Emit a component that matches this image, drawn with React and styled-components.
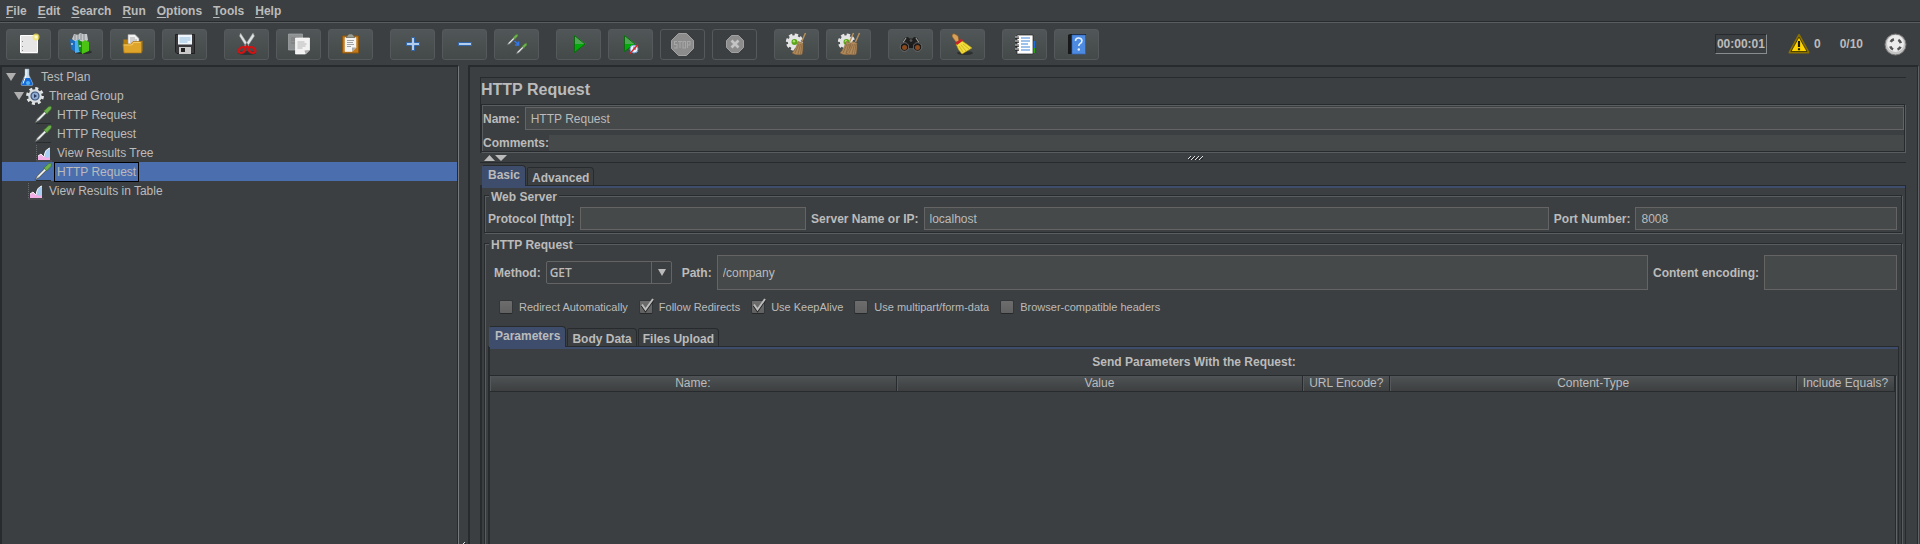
import React from "react";
import styled, { createGlobalStyle, css } from "styled-components";

const c = {
  bg: "#3c3f41",
  text: "#bbbbbb",
  dark: "#282b2d",
  light: "#5a5d5f",
  field: "#45494a",
  fieldBorder: "#646464",
  tab: "#3f4d6d",
  select: "#4b6eaf",
};

const GlobalStyle = createGlobalStyle`
  * { box-sizing: border-box; }
  body { margin: 0; background: ${c.bg}; }
  body, button, input, select {
    font-family: "Liberation Sans", Arial, sans-serif;
    font-size: 12px;
    line-height: 14px;
    color: ${c.text};
  }
`;

/* ---------- shared pieces ---------- */

const etched = css`
  border: 1px solid ${c.dark};
  box-shadow: inset 1px 1px 0 ${c.light}, 1px 1px 0 ${c.light};
`;

const Page = styled.div`
  min-height: 100vh;
  display: flex;
  flex-direction: column;
  overflow: hidden;
`;

const MenuBar = styled.nav`
  display: flex;
  gap: 11px;
  height: 23px;
  padding: 0 6px;
  border-bottom: 1px solid ${c.light};
  box-shadow: inset 0 -1px 0 ${c.dark};
`;

const MenuItem = styled.button`
  border: 0;
  padding: 0;
  background: none;
  font-weight: bold;
  &::first-letter {
    text-decoration: underline;
    text-underline-offset: 2px;
    text-decoration-skip-ink: none;
  }
`;

const ToolBar = styled.div`
  display: flex;
  align-items: center;
  justify-content: space-between;
  height: 42px;
  padding: 0 13px 0 6px;
`;

const Tools = styled.div`
  display: flex;
  gap: 17px;
`;

const ToolGroup = styled.div`
  display: flex;
  gap: 7px;
`;

const ToolButton = styled.button`
  display: flex;
  width: 45px;
  height: 31px;
  padding: 3px 10px;
  border: 1px solid #56595b;
  border-radius: 3px;
  background: ${(p) => (p.disabled ? "none" : "linear-gradient(#515658, #434849)")};
`;

const Icon = styled.svg.attrs((p) => ({
  viewBox: `0 0 ${p.$size || 23} ${p.$size || 23}`,
  "aria-hidden": true,
}))`
  flex: none;
  display: block;
  width: ${(p) => p.$size || 23}px;
  height: ${(p) => p.$size || 23}px;
  overflow: visible;
`;

const Status = styled.div`
  display: flex;
  align-items: center;
`;

const Timer = styled.output`
  padding: 1px 1px;
  border: 1px solid;
  border-color: ${c.dark} #8a8d8f #8a8d8f ${c.dark};
  line-height: 16px;
  font-weight: bold;
  margin-right: 21px;
`;

const WarningButton = styled.button`
  display: flex;
  align-items: center;
  gap: 4px;
  padding: 0;
  border: 0;
  background: none;
  font-weight: bold;
  margin-right: 19px;
`;

const Threads = styled.span`
  font-weight: bold;
  margin-right: 21px;
`;

const Split = styled.div`
  flex: 1;
  display: flex;
`;

/* ---------- tree ---------- */

const TreePane = styled.aside`
  flex: 0 0 459px;
  border: solid ${c.dark};
  border-width: 2px 1px 0 2px;
  border-right-color: #77797b;
  box-shadow: inset -1px 0 0 ${c.dark};
`;

const TreeList = styled.ul`
  list-style: none;
  margin: 0;
  padding: 0 1px 0 0;
`;

const TreeRow = styled.li`
  display: flex;
  align-items: center;
  height: 19px;
  padding-left: ${(p) => p.$indent}px;
  background: ${(p) => (p.$selected ? c.select : "none")};
`;

const Toggle = styled.button`
  flex: none;
  display: flex;
  padding: 0;
  border: 0;
  margin-right: 2px;
  background: none;
`;

const TreeLabel = styled.span`
  margin-left: 3px;
  padding: 2px;
  outline: ${(p) => (p.$selected ? "1px solid #000" : "none")};
`;

const Divider = styled.div`
  flex: 0 0 9px;
  display: flex;
  flex-direction: column;
  justify-content: flex-end;
  align-items: center;
`;

/* ---------- editor ---------- */

const Editor = styled.main`
  flex: 1;
  min-width: 0;
  display: flex;
  flex-direction: column;
  margin-right: 1px;
  padding: 10px 12px 0 10px;
  border: solid ${c.dark};
  border-width: 2px 1px 0 2px;
  border-right-color: #606365;
  box-shadow: inset -1px 0 0 ${c.dark};
`;

const Header = styled.section`
  border: solid ${c.dark};
  border-width: 1px 0 0 1px;
`;

const Title = styled.h1`
  margin: 0;
  height: 26px;
  font-size: 16px;
  line-height: 23px;
`;

const Naming = styled.div`
  ${etched}
  display: flex;
  flex-direction: column;
  gap: 5px;
  margin: 0 1px 1px 0;
  padding: 2px 0 0 1px;
`;

const Label = styled.label`
  flex: none;
  font-weight: bold;
`;

const Row = styled.div`
  display: flex;
  align-items: center;
  gap: ${(p) => p.$gap ?? 5}px;
  padding: ${(p) => (p.$inset ? "0 2px 0 6px" : 0)};
`;

const Field = styled.input`
  flex: ${(p) => p.$grow || 1} 1 0;
  min-width: 0;
  width: 0;
  height: ${(p) => p.$h || 23}px;
  padding: 0 5px;
  border: ${(p) => (p.$plain ? "0" : `1px solid ${c.fieldBorder}`)};
  border-radius: 0;
  background: ${c.field};
  outline: 0;
`;

const EncodingField = styled(Field)`
  flex: 0 0 133px;
`;

const Splitter = styled.div`
  display: grid;
  grid-template-columns: 1fr auto 1fr;
  align-items: center;
  height: 9px;
  padding-left: 4px;
`;

const TabPane = styled.section`
  flex: ${(p) => (p.$fill ? 1 : "none")};
  display: flex;
  flex-direction: column;
  ${(p) => p.$framed && `border-top: 1px solid ${c.dark};`}
`;

const TabStrip = styled.div`
  display: flex;
  align-items: flex-end;
  gap: 1px;
  height: ${(p) => p.$h}px;
  padding-left: ${(p) => p.$left}px;
`;

const Tab = styled.button`
  position: relative;
  height: ${(p) => (p["aria-selected"] ? 21 : 18)}px;
  margin-bottom: ${(p) => (p["aria-selected"] ? -1 : 0)}px;
  padding: ${(p) => (p["aria-selected"] ? "0 5px 2px" : "2px 4px 0")};
  border: 1px solid ${c.dark};
  border-width: 1px 1px 0;
  border-left-color: ${(p) => (p["aria-selected"] ? c.tab : c.dark)};
  border-radius: 2px 4px 0 0;
  background: ${(p) => (p["aria-selected"] ? c.tab : c.bg)};
  font-weight: bold;
`;

const TabBody = styled.div`
  flex: 1;
  display: flex;
  flex-direction: column;
  border: solid ${c.dark};
  border-width: 1px 1px 0 2px;
  padding-top: 2px;
  background: linear-gradient(${c.tab}, ${c.tab}) 0 0 / 100% 2px no-repeat;
`;

const Group = styled.fieldset`
  ${etched}
  position: relative;
  min-width: 0;
  flex: ${(p) => (p.$fill ? 1 : "none")};
  display: flex;
  flex-direction: column;
  margin: ${(p) => (p.$fill ? "10px 3px 0 2px" : "7px 3px 0 2px")};
  padding: ${(p) => (p.$fill ? "11px 2px 0 3px" : "11px 4px 2px 3px")};
  ${(p) => p.$fill && "border-bottom: 0;"}
`;

const Legend = styled.legend`
  position: absolute;
  top: -6px;
  left: 4px;
  padding: 0 2px;
  background: ${c.bg};
  font-weight: bold;
`;

const SelectBox = styled.span`
  position: relative;
  display: flex;
  width: 126px;
  margin-right: 5px;
`;

const Select = styled.select`
  appearance: none;
  width: 100%;
  height: 23px;
  padding: 0 24px 0 3px;
  border: 1px solid ${c.fieldBorder};
  border-radius: 2px;
  background: linear-gradient(${c.fieldBorder}, ${c.fieldBorder}) right 19px top 0 / 1px 100% no-repeat, ${c.bg};
  font-family: "Open Sans", sans-serif;
  font-weight: 600;
`;

const SelectArrow = styled.svg`
  position: absolute;
  right: 6px;
  top: 8px;
  width: 8px;
  height: 7px;
  pointer-events: none;
`;

const Checks = styled.div`
  display: flex;
  gap: 11px;
  margin: 10px 0 12px;
  padding-left: 11px;
`;

const CheckLabel = styled.label`
  display: flex;
  align-items: center;
  gap: 6px;
  height: 14px;
  font-size: 11px;
`;

const CheckBox = styled.span`
  position: relative;
  display: flex;
`;

const CheckInput = styled.input`
  appearance: none;
  width: 14px;
  height: 14px;
  margin: 0;
  border: 1px solid #333638;
  border-bottom-color: #26292a;
  border-radius: 2px;
  background: linear-gradient(#6d6d6d, #616161);
  & + svg { visibility: hidden; }
  &:checked + svg { visibility: visible; }
`;

const CheckMark = styled.svg`
  position: absolute;
  left: 0;
  top: -2px;
  width: 16px;
  height: 16px;
  overflow: visible;
  pointer-events: none;
`;

const TableTitle = styled.h2`
  margin: 0;
  font-size: 12px;
  line-height: 26px;
  text-align: center;
`;

const TableFrame = styled.div`
  flex: 1;
  margin-right: 1px;
  border-top: 1px solid ${c.dark};
  border-right: 1px solid #606365;
  box-shadow: inset -1px 0 0 ${c.dark};
  padding-right: 1px;
`;

const Table = styled.table`
  width: 100%;
  table-layout: fixed;
  border-collapse: separate;
  border-spacing: 0;
`;

const Th = styled.th`
  width: ${(p) => (p.$w ? `${p.$w}px` : "auto")};
  height: 16px;
  padding: 0;
  border-bottom: 1px solid ${c.dark};
  border-right: 1px solid ${c.dark};
  background: linear-gradient(#4f5355, #3d3f40);
  box-shadow: inset 1px 0 0 #56595b;
  font-weight: normal;
  line-height: 15px;
  white-space: nowrap;
`;

/* ---------- drawings ---------- */

const NewIcon = () => (
  <Icon>
    <path d="M3.5 2.5h17v17h-17z" fill="#e6e6e6" stroke="#fff" />
    <path d="M4 20.5h17" stroke="#777" />
    <path d="M5.5 8v1M5.5 13v1M5.5 17v1" stroke="#888" />
    <circle cx="19" cy="4" r="3.5" fill="#f5e65a" opacity=".75" />
    <circle cx="19" cy="4" r="1.5" fill="#fffbd0" />
  </Icon>
);

const TemplatesIcon = () => (
  <Icon>
    <ellipse cx="14" cy="19" rx="9" ry="2" fill="#2b2e2f" />
    <path d="M3 6 5 1l4 1 2-2 3 1 4 0 1 6-4 3-8 0z" fill="#c5c9cb" />
    <path d="M6 2v5M9 1v6M12 1v6M15 1v6" stroke="#8a8e90" />
    <path d="M1 6l5 2v11l-4-3z" fill="#1a6fc0" />
    <path d="M6 8l5-2v13l-5 1z" fill="#49aef0" />
    <path d="M9 7l5 2v12l-4-3z" fill="#178a10" />
    <path d="M13 9l3-2 4 2v9l-7 3z" fill="#4cc413" />
    <path d="M3 10v2M11 12v2" stroke="#fff" />
  </Icon>
);

const OpenIcon = () => (
  <Icon>
    <path d="M2.5 6.5h6l1 2h11l1-1v11h-19z" fill="#b67e0c" />
    <path d="M7 1.5h7l4 4v9H7z" fill="#f2f2f2" stroke="#999" strokeWidth=".6" />
    <path d="M9 5h5M9 7h7M9 9h7" stroke="#9a9a9a" strokeWidth=".8" />
    <path d="M2 11h8l2-2.500h8.500V20H3z" fill="#dfa42a" stroke="#a9750f" strokeWidth=".7" />
    <path d="M3 12h8l1.500-2.500h7" stroke="#f7d479" strokeWidth=".8" fill="none" />
  </Icon>
);

const SaveIcon = () => (
  <Icon>
    <path d="M2.500 1.500h19v19H4l-1.500-1.500z" fill="#39393c" stroke="#202022" />
    <path d="M5 1.500h14v10H5z" fill="#eef6fc" />
    <path d="M6.500 5h11M6.500 7h11M6.500 9h8" stroke="#93bede" />
    <path d="M6 14h12v7H6z" fill="#c9c9c9" />
    <path d="M8 15h4v4H8z" fill="#222" />
  </Icon>
);

const CutIcon = () => (
  <Icon>
    <ellipse cx="12" cy="20" rx="9" ry="2" fill="#303334" />
    <path d="M5.500 0L14 13l-2 2L4.500 3zM18 0L9.500 13l2 2L19.500 3z" fill="#dfe2e2" stroke="#8b8e8e" strokeWidth=".5" />
    <g fill="none" stroke="#d31313" strokeWidth="2.200">
      <ellipse cx="7" cy="17" rx="3.600" ry="2.600" transform="rotate(-35 7 17)" />
      <ellipse cx="17" cy="17" rx="3.600" ry="2.600" transform="rotate(35 17 17)" />
    </g>
    <path d="M10 14.500l2-1.500 2 1.500" stroke="#d31313" strokeWidth="1.600" fill="none" />
  </Icon>
);

const CopyIcon = () => (
  <Icon>
    <path d="M1.500 1h14v16h-14z" fill="#8e9192" stroke="#a5a8a9" strokeWidth=".7" />
    <path d="M4 5h8M4 7h6M4 10h4" stroke="#777" strokeWidth=".8" />
    <path d="M8.500 5h14v12l-4 4h-10z" fill="#f2f2f2" stroke="#fff" strokeWidth=".7" />
    <path d="M10.500 9h7M10.500 11h9M10.500 13h8M10.500 15h5" stroke="#a8a8a8" strokeWidth=".8" />
    <path d="M22.500 17l-5 .5 1 3.500z" fill="#aaa" />
  </Icon>
);

const PasteIcon = () => (
  <Icon>
    <path d="M3.500 3h16v17h-16z" fill="#c27a1c" stroke="#8f560d" />
    <path d="M6 4.500h11v10l-4 4H6z" fill="#f4f4f4" stroke="#fff" strokeWidth=".5" />
    <path d="M8 7.500h7M8 9.500h6M8 11.500h7M8 13.500h4" stroke="#999" strokeWidth=".9" />
    <path d="M17 14.500l-4 0v4z" fill="#aaa" />
    <path d="M7 4.500 9 2l1-1h3l1 1 2 2.500z" fill="#9a9d93" stroke="#55584f" strokeWidth=".6" />
  </Icon>
);

const PlusIcon = () => (
  <Icon>
    <path d="M10.500 4.500h3v5h5v3h-5v5h-3v-5h-5v-3h5z" fill="#b4cdec" stroke="#3167ab" />
  </Icon>
);

const MinusIcon = () => (
  <Icon>
    <path d="M5.500 9.500h13v3h-13z" fill="#b4cdec" stroke="#3167ab" />
  </Icon>
);

const Dropper = () => (
  <>
    <path d="M0 12.500L1.500 9.500 7.500 3.500l1.500 1.500-6 6z" fill="#c4cac8" stroke="#4c5250" strokeWidth=".6" />
    <path d="M2.500 10l5-5" stroke="#fff" strokeWidth=".7" />
    <path d="M6.500 3.500L7.500 3l2.500-2.500 1.500-.3.700.7-.3 1.500L9.500 5 9 6z" fill="#6fb14e" stroke="#3b7529" strokeWidth=".5" />
  </>
);

const ToggleIcon = () => (
  <Icon>
    <g transform="translate(2 1) scale(.9)"><Dropper /></g>
    <path d="M9.500 8l4.500 4m-.5-3.500V12H10" stroke="#3177e8" strokeWidth="1.600" fill="none" />
    <g transform="translate(11 10) scale(.9)"><Dropper /></g>
  </Icon>
);

const PlayIcon = () => (
  <Icon>
    <path d="M7 2v9h12z" fill="#4fa653" />
    <path d="M7 20v-9h12z" fill="#04a90a" />
    <path d="M7.500 2.500v17L18 11z" fill="none" stroke="#0c690f" />
  </Icon>
);

const PlayNowIcon = () => (
  <Icon>
    <path d="M5 2v9h12z" fill="#4fa653" />
    <path d="M5 19v-8h12z" fill="#04a90a" />
    <path d="M5.500 2.500v16L16 11z" fill="none" stroke="#0c690f" />
    <circle cx="15" cy="16" r="4" fill="#e9f2fb" stroke="#6d9bc9" />
    <path d="M15 13.500V16h2" stroke="#355f92" fill="none" />
    <path d="M11 20.500l8-9" stroke="#dc2222" strokeWidth="1.400" />
  </Icon>
);

const StopIcon = () => (
  <Icon>
    <path d="M7.500.5h8l7 7v8l-7 7h-8l-7-7v-8z" fill="#8c8c8c" stroke="#a2a2a2" />
    <g fill="none" stroke="#a6a6a6" strokeWidth="1.100">
      <path d="M6 8.500H3.500v3H6v3.500H3M7 8.500h4M9 8.500V15M12 8.500h2.500V15H12zM16.500 15V8.500H19V12h-2.500" />
    </g>
  </Icon>
);

const ShutdownIcon = () => (
  <Icon>
    <path d="M8.500 2.500h7l5 5v7l-5 5h-7l-5-5v-7z" fill="#8c8c8c" stroke="#a0a0a0" />
    <path d="M8.500 7.500l7 7m0-7l-7 7" stroke="#c4c4c4" strokeWidth="2.600" />
  </Icon>
);

const Gear = ({ x = 9.5, y = 9 }) => (
  <g transform={`translate(${x} ${y})`}>
    <circle r="7.300" fill="none" stroke="#e6e6e6" strokeWidth="2.600" strokeDasharray="3.400 2.330" />
    <circle r="6.700" fill="#e4e4e4" />
    <circle r="3" fill="#5aa71a" />
    <circle cx="-.5" cy="-.8" r="1.200" fill="#a9e06b" />
  </g>
);

const Broom = ({ x = 0 }) => (
  <g transform={`translate(${x} 0)`}>
    <path d="M20.500 0l-4 9" stroke="#b58f5c" strokeWidth="1.500" />
    <path d="M13 8.500l5 1.500c0 5 0 8-1 11.500-3 .5-7 .5-10-1.500 3-3 5-7 6-11.500z" fill="#b08a5c" stroke="#7b5b35" strokeWidth=".5" />
    <path d="M14 11l-4 9M15.500 11l-2.500 10M17 11l-1.500 10" stroke="#7b5b35" strokeWidth=".6" />
  </g>
);

const ClearIcon = () => <Icon><Gear /><Broom /></Icon>;
const ClearAllIcon = () => <Icon><Gear /><Broom x={-4} /><Broom x={2} /></Icon>;

const SearchIcon = () => (
  <Icon>
    <path d="M1 14L5.500 5l3.500-1 2 2h2l2-2 3.500 1 4.500 9z" fill="#1f1f1f" />
    <path d="M4 9.500l3-4.500M20 9.500L17 5" stroke="#9a9a9a" strokeWidth="1.200" />
    <circle cx="12" cy="7.500" r="1.800" fill="#555" stroke="#141414" strokeWidth=".6" />
    <circle cx="5.500" cy="14" r="4.300" fill="#1a1a1a" stroke="#7a7a7a" strokeWidth=".8" />
    <circle cx="18.500" cy="14" r="4.300" fill="#1a1a1a" stroke="#7a7a7a" strokeWidth=".8" />
    <circle cx="5.500" cy="14.500" r="2.500" fill="#8a4a20" />
    <circle cx="18.500" cy="14.500" r="2.500" fill="#8a4a20" />
    <path d="M10 11h4v4h-4z" fill="#1c1c1c" />
  </Icon>
);

const SweepIcon = () => (
  <Icon>
    <ellipse cx="14" cy="20" rx="8" ry="2" fill="#2d3031" />
    <path d="M1 3Q1 0 4 1l3 2 1 5-3 1-3-4z" fill="#d9a05a" stroke="#8a5a22" strokeWidth=".6" />
    <path d="M11 8q5 3 10 7l-10 6Q7 17 5 11z" fill="#f0dc3c" stroke="#b79a10" strokeWidth=".6" />
    <path d="M8 13l4 6M10 12l5 6M12 11l6 5" stroke="#c7a915" strokeWidth=".7" />
    <path d="M4.500 10l6-4.500 1.500 2-6 4.500z" fill="#d0202a" />
  </Icon>
);

const NotesIcon = () => (
  <Icon>
    <path d="M19 8h3v7h-3z" fill="#1f70d8" />
    <path d="M19 15h3v5h-3z" fill="#26a416" />
    <path d="M4 2h16v19H4z" fill="#fff" stroke="#222" strokeWidth=".7" />
    <path d="M8 5h9M8 8h9M8 11h7M8 14h9M8 17h9" stroke="#3f86d6" strokeWidth="1.200" />
    <path d="M2 4.500h4M2 8.500h4M2 12.500h4M2 16.500h4" stroke="#222" strokeWidth="2.400" />
    <path d="M2 4h4M2 8h4M2 12h4M2 16h4" stroke="#eee" strokeWidth="1.200" />
  </Icon>
);

const HelpIcon = () => (
  <Icon>
    <path d="M3 2l2-1h16v19l-2 1H3z" fill="#17191b" />
    <path d="M7 2h13.500v19H7z" fill="#4d8be0" stroke="#3067b8" strokeWidth=".7" />
    <path d="M10.500 8q0-3 3-3t3.500 2.500q0 2-2 3.200-1.200.8-1.200 2.300" stroke="#e6f1ff" strokeWidth="1.500" fill="none" />
    <circle cx="13.800" cy="16.500" r="1.200" fill="#e6f1ff" />
  </Icon>
);

const WarningIcon = () => (
  <Icon $size={22}>
    <path d="M11 2L20.500 19.500h-19z" fill="#ffd100" stroke="#8a7000" strokeWidth="2" strokeLinejoin="round" />
    <path d="M11 4L19 18.500H3z" fill="#ffd400" stroke="#2a2400" strokeWidth=".8" />
    <path d="M11 8v6M11 15.300v2" stroke="#1a1a1a" strokeWidth="2.200" />
  </Icon>
);

const ConnectIcon = () => (
  <Icon>
    <circle cx="11.500" cy="11.500" r="10.500" fill="#c4c4c4" stroke="#777" />
    <circle cx="11.500" cy="10.500" r="8.500" fill="#ececec" />
    <circle cx="11.500" cy="11.500" r="5.500" fill="none" stroke="#555" strokeWidth="2.600" strokeDasharray="4 4.640" strokeDashoffset="-2.320" />
  </Icon>
);

const FlaskIcon = () => (
  <Icon $size={18}>
    <path d="M7 1h4v6l4 9q0 1.500-1.500 1.500h-9Q3 17.500 3 16l4-9z" fill="#c9dbea" stroke="#8ea3b3" strokeWidth=".5" />
    <path d="M6 10h6l2.700 6q0 1.200-1.200 1.200h-9q-1.200 0-1.200-1.200z" fill="#1469d8" />
    <path d="M8 1.500v6l-3 8" stroke="#fff" fill="none" />
    <circle cx="10" cy="15" r="2" fill="#4fb4f5" />
  </Icon>
);

const ThreadIcon = () => (
  <Icon $size={18}>
    <circle cx="9" cy="9" r="7.500" fill="none" stroke="#e3e6e8" strokeWidth="2.800" strokeDasharray="3 2.890" />
    <circle cx="9" cy="9" r="6.800" fill="#d9dde0" />
    <circle cx="9" cy="9" r="4" fill="#8fabd0" stroke="#3a5379" strokeWidth="1.200" />
    <path d="M8 7l3 2-3 2z" fill="#24395c" />
  </Icon>
);

const SamplerIcon = () => (
  <Icon $size={18}>
    <path d="M2 17.500h15" stroke="#2a2d2e" />
    <g transform="translate(1 0) scale(1.350)"><Dropper /></g>
  </Icon>
);

const ListenerIcon = () => (
  <Icon $size={18}>
    <path d="M2.500 1v16H18" stroke="#737678" strokeWidth=".8" strokeDasharray="1 1" fill="none" />
    <path d="M4 16v-4l3-2 3 3 6-7v10z" fill="#f3b0e6" />
    <path d="M10 12q1-7 6-8v9l-3 1z" fill="#a9cdf3" />
    <path d="M4 12l3-2 3 3q1-8 6-9" stroke="#fff" strokeWidth=".9" fill="none" />
  </Icon>
);

const Expander = () => (
  <Toggle aria-label="Collapse">
    <svg width="10" height="8" viewBox="0 0 10 8"><path d="M0 0h10L5 8z" fill="#afafaf" /></svg>
  </Toggle>
);

const Grip = ({ id, width, height }) => (
  <svg width={width} height={height} shapeRendering="crispEdges" aria-hidden="true">
    <pattern id={id} width="4" height="4" patternUnits="userSpaceOnUse">
      <path d="M2 0h1v1H2zM1 1h1v1H1zM0 2h1v1H0zM3 3h1v1H3z" fill="#e0e0e0" />
      <path d="M3 1h1v1H3zM2 2h1v1H2zM1 3h1v1H1z" fill="#202224" />
    </pattern>
    <rect width={width} height={height} fill={`url(#${id})`} />
  </svg>
);

/* ---------- data ---------- */

const menus = ["File", "Edit", "Search", "Run", "Options", "Tools", "Help"];

const toolGroups = [
  [["New", NewIcon], ["Templates", TemplatesIcon], ["Open", OpenIcon], ["Save", SaveIcon]],
  [["Cut", CutIcon], ["Copy", CopyIcon], ["Paste", PasteIcon]],
  [["Expand all", PlusIcon], ["Collapse all", MinusIcon], ["Toggle", ToggleIcon]],
  [["Start", PlayIcon], ["Start no pauses", PlayNowIcon], ["Stop", StopIcon, true], ["Shutdown", ShutdownIcon, true]],
  [["Clear", ClearIcon], ["Clear all", ClearAllIcon]],
  [["Find", SearchIcon], ["Reset search", SweepIcon]],
  [["Function helper", NotesIcon], ["Help", HelpIcon]],
];

const tree = [
  { label: "Test Plan", indent: 4, icon: FlaskIcon, open: true },
  { label: "Thread Group", indent: 12, icon: ThreadIcon, open: true },
  { label: "HTTP Request", indent: 32, icon: SamplerIcon },
  { label: "HTTP Request", indent: 32, icon: SamplerIcon },
  { label: "View Results Tree", indent: 32, icon: ListenerIcon },
  { label: "HTTP Request", indent: 32, icon: SamplerIcon, selected: true },
  { label: "View Results in Table", indent: 24, icon: ListenerIcon },
];

const checks = [
  ["Redirect Automatically", false],
  ["Follow Redirects", true],
  ["Use KeepAlive", true],
  ["Use multipart/form-data", false],
  ["Browser-compatible headers", false],
];

const columns = [["Name:"], ["Value"], ["URL Encode?", 87], ["Content-Type"], ["Include Equals?", 98]];

const Tabs = ({ names, height, left }) => (
  <TabStrip role="tablist" $h={height} $left={left}>
    {names.map((name, i) => (
      <Tab key={name} role="tab" aria-selected={i === 0}>{name}</Tab>
    ))}
  </TabStrip>
);

export default function App() {
  return (
    <Page>
      <GlobalStyle />
      <MenuBar>
        {menus.map((m) => <MenuItem key={m}>{m}</MenuItem>)}
      </MenuBar>
      <ToolBar>
        <Tools>
          {toolGroups.map((group, i) => (
            <ToolGroup key={i}>
              {group.map(([name, Glyph, off]) => (
                <ToolButton key={name} aria-label={name} disabled={off}><Glyph /></ToolButton>
              ))}
            </ToolGroup>
          ))}
        </Tools>
        <Status>
          <Timer>00:00:01</Timer>
          <WarningButton><WarningIcon />0</WarningButton>
          <Threads>0/10</Threads>
          <ConnectIcon />
        </Status>
      </ToolBar>
      <Split>
        <TreePane>
          <TreeList>
            {tree.map(({ label, indent, icon: Glyph, open, selected }, i) => (
              <TreeRow key={i} $indent={indent} $selected={selected}>
                {open && <Expander />}
                <Glyph />
                <TreeLabel $selected={selected}>{label}</TreeLabel>
              </TreeRow>
            ))}
          </TreeList>
        </TreePane>
        <Divider><Grip id="grip-tree" width={4} height={2} /></Divider>
        <Editor>
          <Header>
            <Title>HTTP Request</Title>
            <Naming>
              <Row>
                <Label htmlFor="name">Name:</Label>
                <Field id="name" defaultValue="HTTP Request" />
              </Row>
              <Row $gap={0}>
                <Label htmlFor="comments">Comments:</Label>
                <Field id="comments" $h={16} $plain />
              </Row>
            </Naming>
          </Header>
          <Splitter>
            <svg width="23" height="6" viewBox="0 0 23 6">
              <path d="M0 6h11L5.500 0zM11 0h12l-6 6z" fill="#bbbbbb" />
            </svg>
            <Grip id="grip-editor" width={15} height={4} />
          </Splitter>
          <TabPane $fill $framed>
            <Tabs names={["Basic", "Advanced"]} height={22} left={2} />
            <TabBody>
              <Group>
                <Legend>Web Server</Legend>
                <Row>
                  <Label htmlFor="protocol">Protocol [http]:</Label>
                  <Field id="protocol" $grow={214} />
                  <Label htmlFor="server">Server Name or IP:</Label>
                  <Field id="server" $grow={612} defaultValue="localhost" />
                  <Label htmlFor="port">Port Number:</Label>
                  <Field id="port" $grow={249} defaultValue="8008" />
                </Row>
              </Group>
              <Group $fill>
                <Legend>HTTP Request</Legend>
                <Row $inset>
                  <Label htmlFor="method">Method:</Label>
                  <SelectBox>
                    <Select id="method" defaultValue="GET">
                      <option>GET</option>
                      <option>POST</option>
                    </Select>
                    <SelectArrow viewBox="0 0 8 7"><path d="M0 0h8L4 7z" fill="#bbbbbb" /></SelectArrow>
                  </SelectBox>
                  <Label htmlFor="path">Path:</Label>
                  <Field id="path" $h={35} defaultValue="/company" />
                  <Label htmlFor="encoding">Content encoding:</Label>
                  <EncodingField id="encoding" $h={35} />
                </Row>
                <Checks>
                  {checks.map(([name, on]) => (
                    <CheckLabel key={name}>
                      <CheckBox>
                        <CheckInput type="checkbox" defaultChecked={on} />
                        <CheckMark viewBox="0 0 16 16">
                          <path d="M3 7.500l3.500 5L14 2" fill="none" stroke="#222" strokeWidth="2.500" />
                          <path d="M3 6.500l3.500 5L14 1" fill="none" stroke="#bcbcbc" strokeWidth="2" />
                        </CheckMark>
                      </CheckBox>
                      {name}
                    </CheckLabel>
                  ))}
                </Checks>
                <TabPane $fill>
                  <Tabs names={["Parameters", "Body Data", "Files Upload"]} height={20} left={1} />
                  <TabBody>
                    <TableTitle>Send Parameters With the Request:</TableTitle>
                    <TableFrame>
                      <Table>
                        <thead>
                          <tr>
                            {columns.map(([name, w]) => <Th key={name} scope="col" $w={w}>{name}</Th>)}
                          </tr>
                        </thead>
                      </Table>
                    </TableFrame>
                  </TabBody>
                </TabPane>
              </Group>
            </TabBody>
          </TabPane>
        </Editor>
      </Split>
    </Page>
  );
}
